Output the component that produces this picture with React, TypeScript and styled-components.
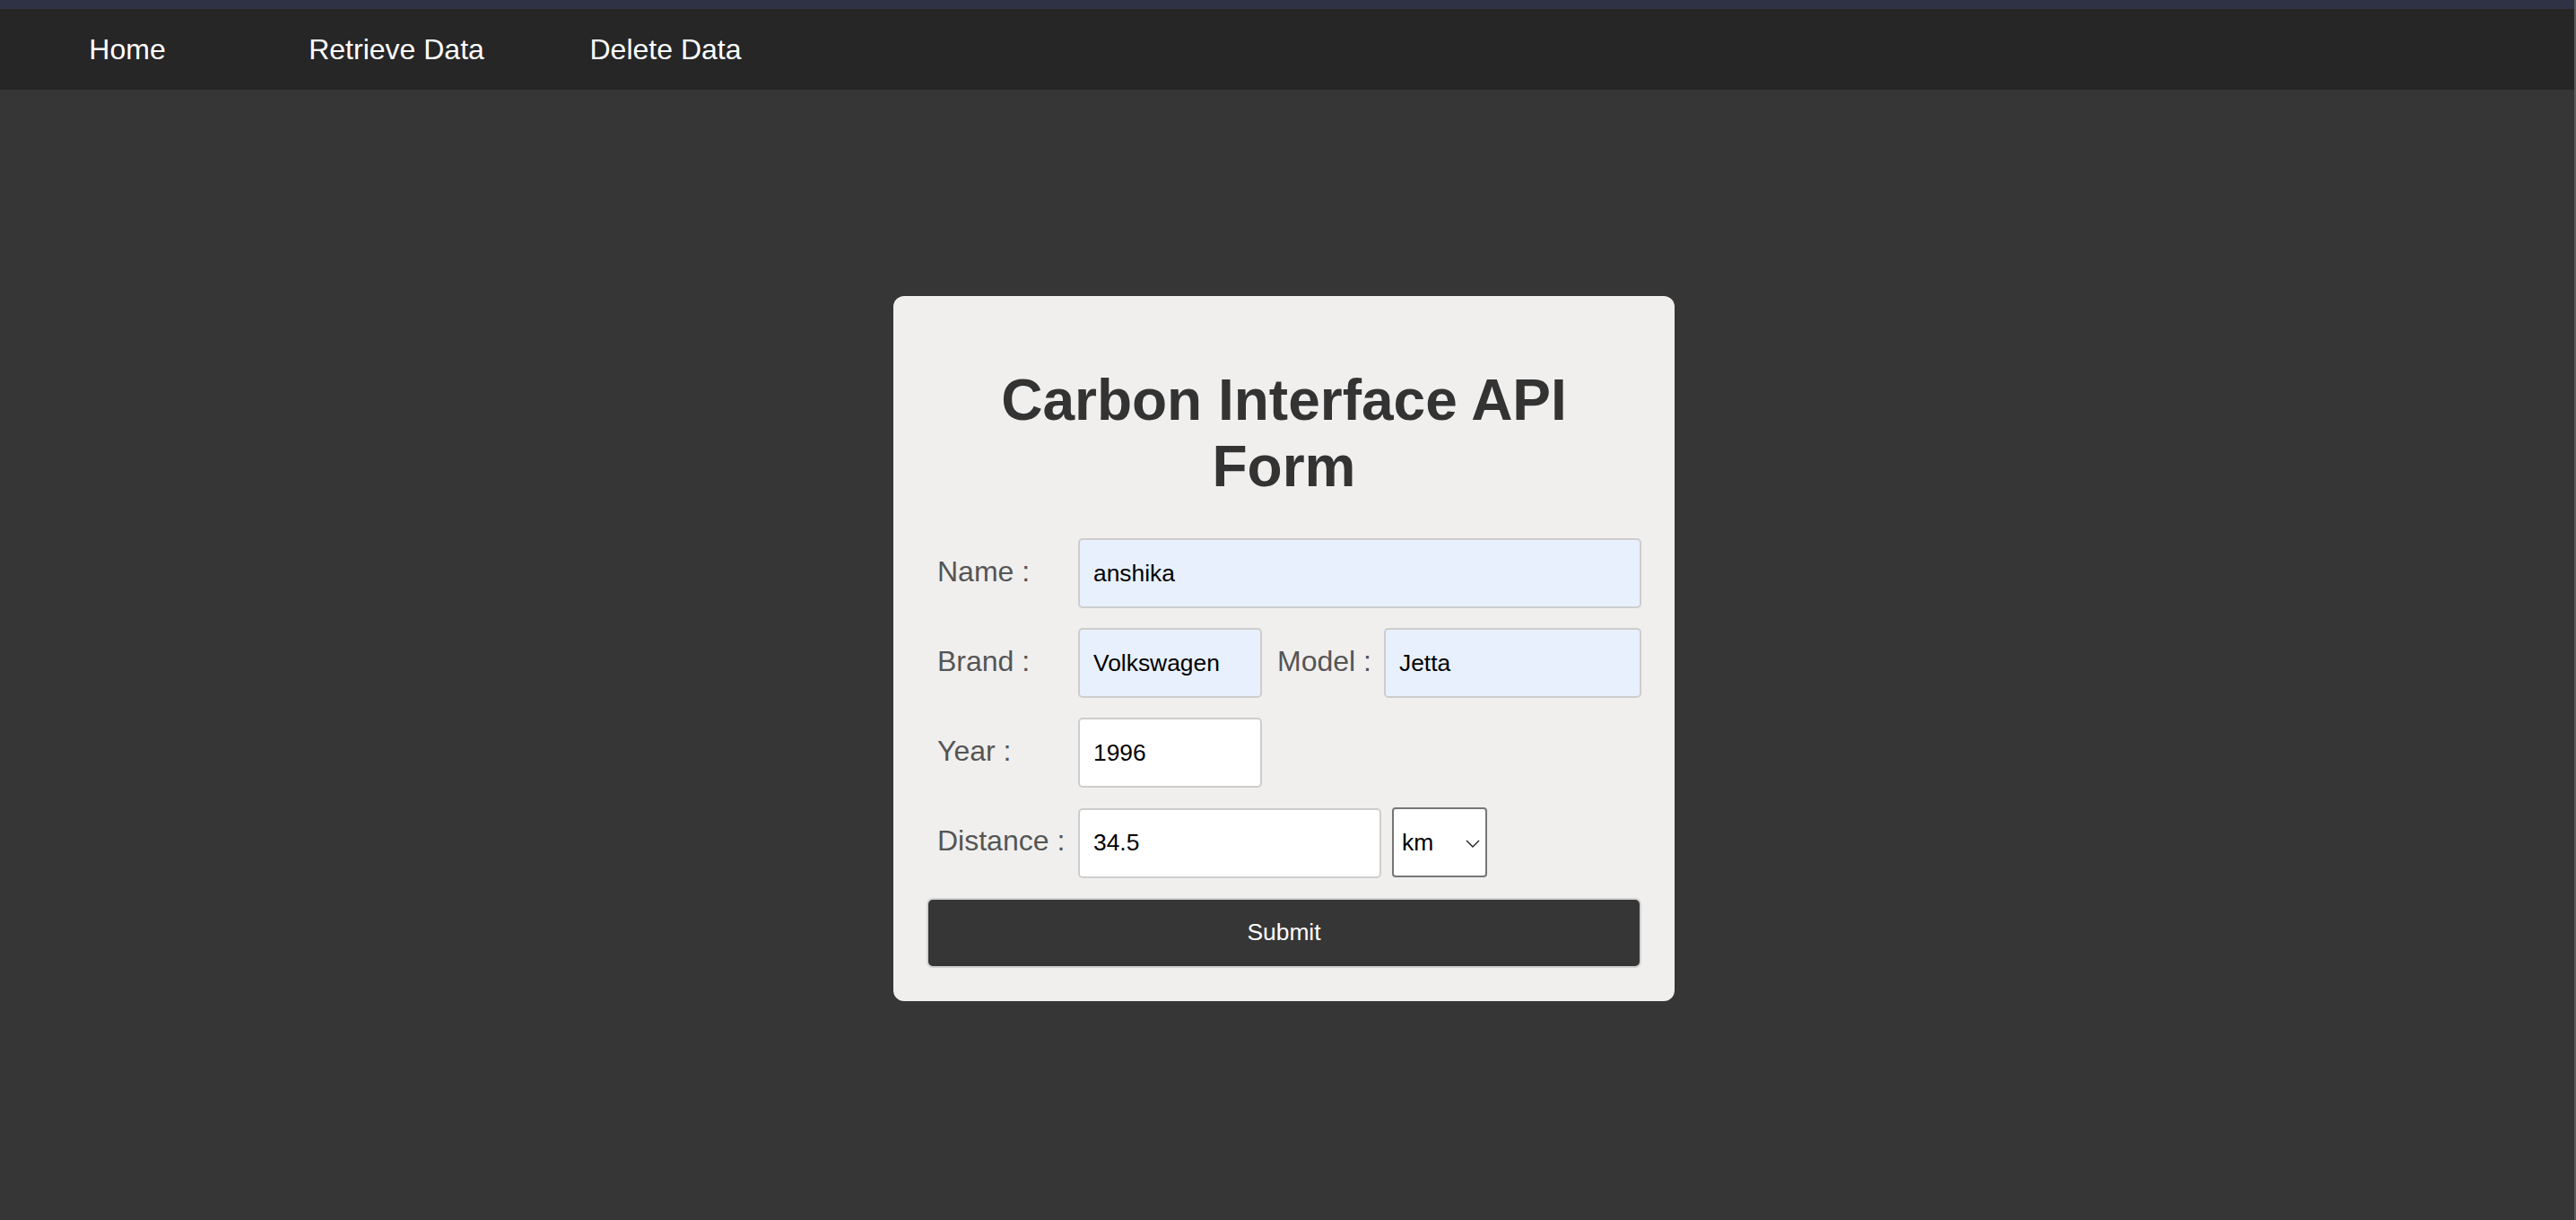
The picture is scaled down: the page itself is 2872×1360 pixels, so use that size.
import React from "react";
import styled, { createGlobalStyle } from "styled-components";

const Global = createGlobalStyle`
  html, body {
    margin: 0;
    padding: 0;
    background: #363636;
    font-family: "Liberation Sans", Arial, sans-serif;
  }
  * { box-sizing: border-box; }
`;

const Page = styled.div`
  min-height: 1360px;
  background: #363636;
  border-right: 2px solid #5c5c5c;
  display: flex;
  flex-direction: column;
`;

const TopStrip = styled.div`
  height: 10px;
  background: #2f3245;
`;

const NavBar = styled.nav`
  height: 90px;
  background: #262626;
  display: flex;
  align-items: center;
  gap: 16px;
`;

const NavLink = styled.a`
  width: 284px;
  text-align: center;
  color: #ffffff;
  font-size: 32px;
  text-decoration: none;
  cursor: pointer;
`;

const Main = styled.main`
  flex: 1;
  display: flex;
  justify-content: center;
  align-items: flex-start;
  padding-top: 230px;
  padding-right: 7px;
`;

const Card = styled.form`
  width: 871px;
  background: #f0efee;
  border-radius: 12px;
  padding: 36px 37px 37px;
  display: flex;
  flex-direction: column;
`;

const Title = styled.h1`
  margin: 43px 0;
  font-size: 64px;
  font-weight: bold;
  color: #333333;
  text-align: center;
  line-height: normal;
`;

const Rows = styled.div`
  display: flex;
  flex-direction: column;
  gap: 22px;
`;

const Row = styled.div`
  display: flex;
  align-items: baseline;
`;

const Label = styled.label<{ $w: number; $pl: number }>`
  flex: 0 0 ${(p) => p.$w}px;
  padding-left: ${(p) => p.$pl}px;
  font-size: 32px;
  color: #555555;
  white-space: nowrap;
`;

const Input = styled.input<{ $w?: number; $filled?: boolean }>`
  ${(p) => (p.$w ? `flex: 0 0 ${p.$w}px;` : "flex: 1 1 auto;")}
  min-width: 0;
  height: 78px;
  padding: 0 15px;
  border: 2px solid #cdcdcd;
  border-radius: 5px;
  background: ${(p) => (p.$filled ? "#e8f0fe" : "#ffffff")};
  font-family: "Liberation Sans", Arial, sans-serif;
  font-size: 26.4px;
  color: #000000;
  outline: none;
`;

const SelectWrap = styled.span`
  position: relative;
  display: inline-flex;
  margin-left: 12px;
  align-self: baseline;
`;

const Select = styled.select`
  appearance: none;
  -webkit-appearance: none;
  width: 106px;
  height: 78px;
  padding: 0 0 0 9px;
  border: 2px solid #767676;
  border-radius: 4px;
  background: #ffffff;
  font-family: "Liberation Sans", Arial, sans-serif;
  font-size: 26.4px;
  color: #000000;
  outline: none;
`;

const Chevron = styled.svg`
  position: absolute;
  right: 8px;
  top: 36px;
  width: 16px;
  height: 9px;
  pointer-events: none;
`;

const Submit = styled.button`
  margin-top: 22px;
  height: 78px;
  width: 100%;
  background: #363636;
  color: #ffffff;
  border: 2px solid #d2d2d2;
  border-radius: 7px;
  font-family: "Liberation Sans", Arial, sans-serif;
  font-size: 26.4px;
  cursor: pointer;
`;

export default function App() {
  return (
    <>
      <Global />
      <Page>
        <TopStrip />
        <NavBar>
          <NavLink>Home</NavLink>
          <NavLink>Retrieve Data</NavLink>
          <NavLink>Delete Data</NavLink>
        </NavBar>
        <Main>
          <Card onSubmit={(e) => e.preventDefault()}>
            <Title>Carbon Interface API Form</Title>
            <Rows>
              <Row>
                <Label $w={169} $pl={12}>Name :</Label>
                <Input $filled defaultValue="anshika" />
              </Row>
              <Row>
                <Label $w={169} $pl={12}>Brand :</Label>
                <Input $filled $w={205} defaultValue="Volkswagen" />
                <Label $w={136} $pl={17}>Model :</Label>
                <Input $filled defaultValue="Jetta" />
              </Row>
              <Row>
                <Label $w={169} $pl={12}>Year :</Label>
                <Input $w={205} defaultValue="1996" />
              </Row>
              <Row>
                <Label $w={169} $pl={12}>Distance :</Label>
                <Input $w={338} defaultValue="34.5" />
                <SelectWrap>
                  <Select defaultValue="km">
                    <option value="km">km</option>
                    <option value="mi">mi</option>
                  </Select>
                  <Chevron viewBox="0 0 16 9">
                    <path d="M1 1 L8 8 L15 1" fill="none" stroke="#222" strokeWidth="1.4" />
                  </Chevron>
                </SelectWrap>
              </Row>
            </Rows>
            <Submit type="submit">Submit</Submit>
          </Card>
        </Main>
      </Page>
    </>
  );
}
